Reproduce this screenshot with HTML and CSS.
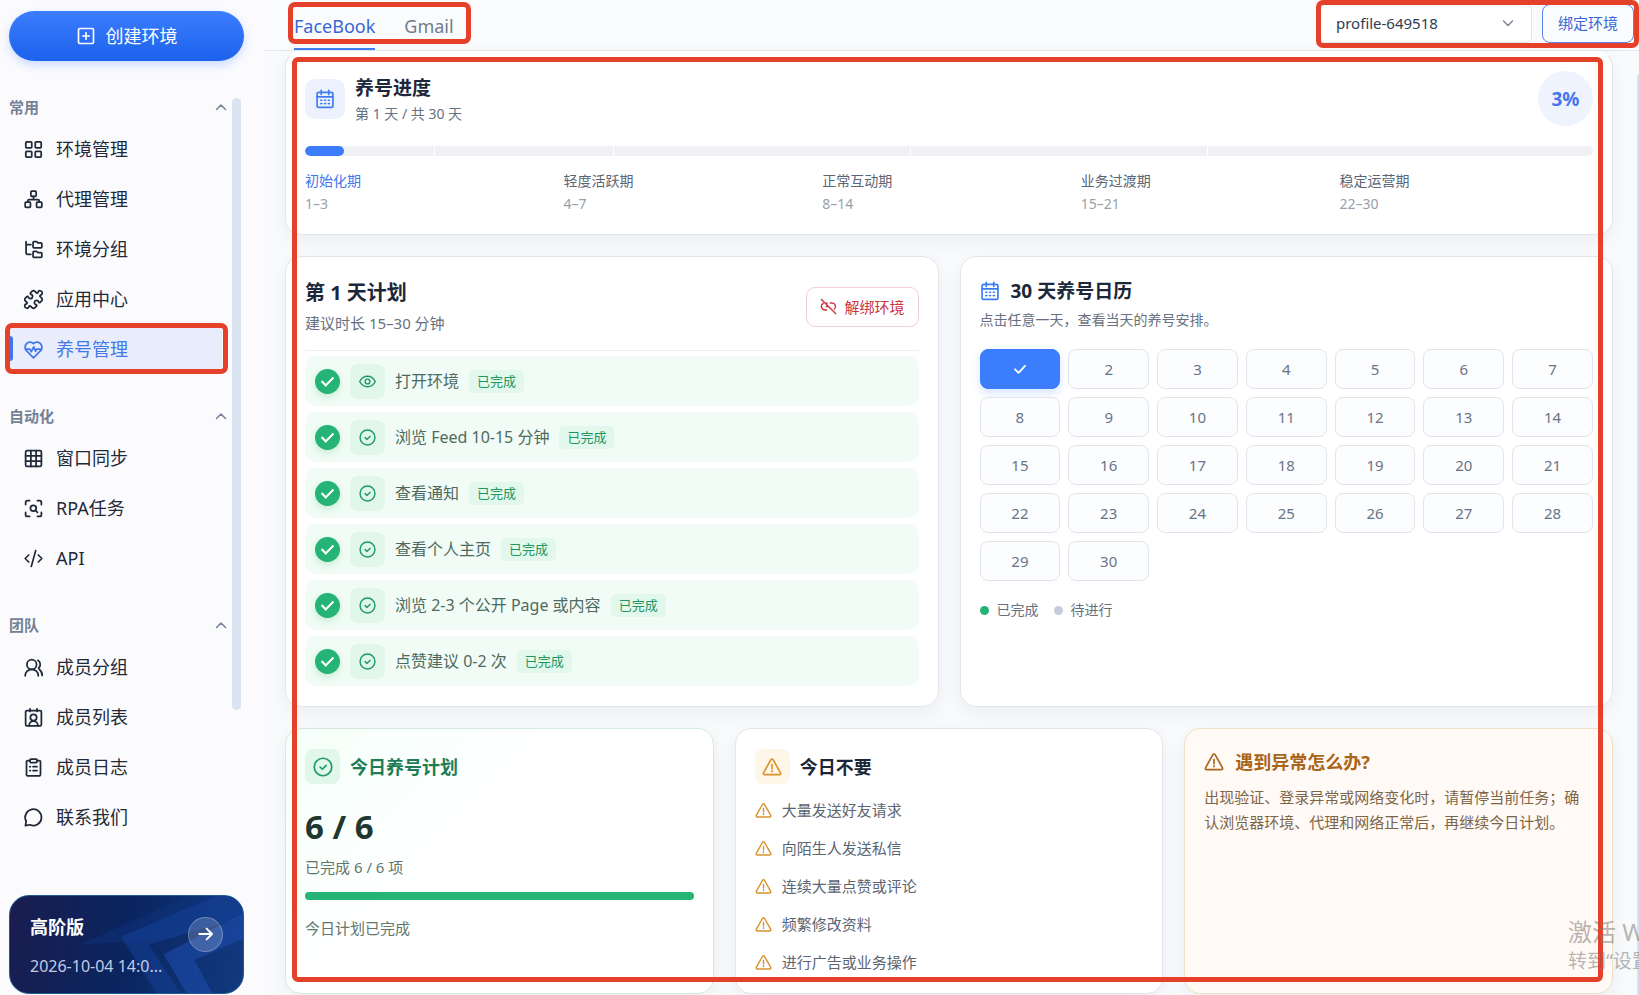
FILE: index.html
```html
<!DOCTYPE html>
<html lang="zh-CN">
<head>
<meta charset="utf-8">
<meta name="viewport" content="width=device-width, initial-scale=1">
<title>养号管理</title>
<link rel="stylesheet" href="styles.css">
</head>
<body>
<svg class="sprite" aria-hidden="true">
  <symbol id="i-plus" viewBox="0 0 24 24"><rect x="3" y="3" width="18" height="18" rx="1.5"/><path d="M12 8v8M8 12h8"/></symbol>
  <symbol id="i-up" viewBox="0 0 24 24"><path d="M3 17l9-9 9 9"/></symbol>
  <symbol id="i-down" viewBox="0 0 24 24"><path d="M3 8l9 9 9-9"/></symbol>
  <symbol id="i-apps" viewBox="0 0 24 24"><rect x="3.2" y="3.2" width="6.8" height="6.8" rx="1"/><rect x="14" y="3.2" width="6.8" height="6.8" rx="1"/><rect x="3.2" y="14" width="6.8" height="6.8" rx="1"/><rect x="14" y="14" width="6.8" height="6.8" rx="1"/></symbol>
  <symbol id="i-tree" viewBox="0 0 24 24"><rect x="9" y="2.5" width="6" height="6" rx="1"/><rect x="2.5" y="15" width="6" height="6" rx="1"/><rect x="15.500" y="15" width="6" height="6" rx="1"/><path d="M12 8.500v3.500M5.500 15v-1.500a1.500 1.500 0 0 1 1.500-1.500h10a1.500 1.500 0 0 1 1.500 1.500V15"/></symbol>
  <symbol id="i-folders" viewBox="0 0 24 24"><path d="M3.500 3v12.500a2 2 0 0 0 2 2H9M3.500 6.500H9M12.500 3h3l1.500 1.500h3.500a1 1 0 0 1 1 1V9a1 1 0 0 1-1 1h-8a1 1 0 0 1-1-1V4a1 1 0 0 1 1-1zM12.500 14h3l1.500 1.500h3.500a1 1 0 0 1 1 1V20a1 1 0 0 1-1 1h-8a1 1 0 0 1-1-1v-5a1 1 0 0 1 1-1z"/></symbol>
  <symbol id="i-puzzle" viewBox="0 0 24 24"><path d="M15.390 4.390a1 1 0 0 0 1.680-.474 2.500 2.500 0 1 1 3.014 3.015 1 1 0 0 0-.474 1.680l1.683 1.682a2.414 2.414 0 0 1 0 3.414L19.610 15.390a1 1 0 0 1-1.680-.474 2.500 2.500 0 1 0-3.014 3.015 1 1 0 0 1 .474 1.680l-1.683 1.682a2.414 2.414 0 0 1-3.414 0L8.610 19.610a1 1 0 0 0-1.680.474 2.500 2.500 0 1 1-3.014-3.015 1 1 0 0 0 .474-1.680l-1.683-1.682a2.414 2.414 0 0 1 0-3.414L4.390 8.610a1 1 0 0 1 1.680.474 2.500 2.500 0 1 0 3.014-3.015 1 1 0 0 1-.474-1.680l1.683-1.682a2.414 2.414 0 0 1 3.414 0z"/></symbol>
  <symbol id="i-heart" viewBox="0 0 24 24"><path d="M12 21.500l-7.800-7.800A5.700 5.700 0 0 1 12 5.200a5.700 5.700 0 0 1 7.800 8.500zM2.800 11.500h5l1.700 3 2.800-5.500 2 5 1.200-2.500h5.700"/></symbol>
  <symbol id="i-grid" viewBox="0 0 24 24"><rect x="3" y="3" width="18" height="18" rx="1.500"/><path d="M9 3v18M15 3v18M3 9h18M3 15h18"/></symbol>
  <symbol id="i-scan" viewBox="0 0 24 24"><path d="M3 7.500V5a2 2 0 0 1 2-2h2.500M16.500 3H19a2 2 0 0 1 2 2v2.500M21 16.500V19a2 2 0 0 1-2 2h-2.500M7.500 21H5a2 2 0 0 1-2-2v-2.500M14 14l2.500 2.500"/><circle cx="11.800" cy="11.800" r="3.300"/></symbol>
  <symbol id="i-code" viewBox="0 0 24 24"><path d="M6.500 8L2.500 12l4 4M17.500 8l4 4-4 4M14.500 3l-5 18"/></symbol>
  <symbol id="i-group" viewBox="0 0 24 24"><circle cx="10" cy="8.500" r="5.500"/><path d="M2.500 21.500a7.500 7.500 0 0 1 15 0M17 3.800a5.500 5.500 0 0 1 .8 8.900M18.500 14a9 9 0 0 1 3.500 7"/></symbol>
  <symbol id="i-badge" viewBox="0 0 24 24"><rect x="3" y="4" width="18" height="17.500" rx="1.500"/><path d="M8 2v3M16 2v3M7 21a5 5 0 0 1 10 0"/><circle cx="12" cy="12" r="3.600"/></symbol>
  <symbol id="i-clip" viewBox="0 0 24 24"><path d="M8 4H5.500A1.500 1.500 0 0 0 4 5.500v14A1.500 1.500 0 0 0 5.500 21.500h13a1.500 1.500 0 0 0 1.500-1.500V5.500A1.500 1.500 0 0 0 18.500 4H16M7.800 11h.6M7.800 15.500h.6M11.500 11H16M11.500 15.500H16"/><rect x="8" y="2.300" width="8" height="4" rx="1"/></symbol>
  <symbol id="i-chat" viewBox="0 0 24 24"><path d="M2.800 21.200l.8-5A9.300 9.300 0 1 1 8 20.300z"/></symbol>
  <symbol id="i-arrow" viewBox="0 0 24 24"><path d="M2 12h19M13 4l8 8-8 8"/></symbol>
  <symbol id="i-cal" viewBox="0 0 24 24"><rect x="2.500" y="4" width="19" height="18" rx="2"/><path d="M2.500 9.500h19M7.500 1.500v5M16.500 1.500v5M7 13.500h1.200M11.500 13.500h1.200M16 13.500h1.200M7 17.500h1.200M11.500 17.500h1.200M16 17.500h1.200"/></symbol>
  <symbol id="i-unlink" viewBox="0 0 24 24"><path d="M2 2l20 20M9.500 17H7A5 5 0 0 1 4.500 7.700M9.500 7h.5M14.500 7H17a5 5 0 0 1 3.500 8.500M9 12h2.500"/></symbol>
  <symbol id="i-eye" viewBox="0 0 24 24"><path d="M1 12C3.500 7 7.500 4.500 12 4.500S20.500 7 23 12c-2.500 5-6.500 7.500-11 7.500S3.500 17 1 12z"/><circle cx="12" cy="12" r="3.400"/></symbol>
  <symbol id="i-ok" viewBox="0 0 24 24"><circle cx="12" cy="12" r="10.500"/><path d="M8.500 12l2.700 2.700 4.600-4.600"/></symbol>
  <symbol id="i-tick" viewBox="0 0 24 24"><path d="M3.500 12.500l6 6L20.500 6.500"/></symbol>
  <symbol id="i-warn" viewBox="0 0 24 24"><path d="M10.700 3.200L1.800 19a1.500 1.500 0 0 0 1.300 2.200h17.800a1.500 1.500 0 0 0 1.300-2.200L13.300 3.200a1.500 1.500 0 0 0-2.600 0zM12 9v5M12 16.700v1"/></symbol>
</svg>

<div class="app">
  <aside class="sidebar">
    <button class="create" type="button"><svg class="icon icon-20"><use href="#i-plus"/></svg>创建环境</button>
    <div class="nav-area">
      <nav class="nav">
        <section class="group">
          <button class="group-head" type="button">常用<svg class="icon icon-12"><use href="#i-up"/></svg></button>
          <a class="item" href="#"><svg class="icon icon-22"><use href="#i-apps"/></svg>环境管理</a>
          <a class="item" href="#"><svg class="icon icon-22"><use href="#i-tree"/></svg>代理管理</a>
          <a class="item" href="#"><svg class="icon icon-22"><use href="#i-folders"/></svg>环境分组</a>
          <a class="item" href="#"><svg class="icon icon-22"><use href="#i-puzzle"/></svg>应用中心</a>
          <a class="item active" href="#"><svg class="icon icon-22"><use href="#i-heart"/></svg>养号管理<span class="mark mark-item"></span></a>
        </section>
        <section class="group">
          <button class="group-head" type="button">自动化<svg class="icon icon-12"><use href="#i-up"/></svg></button>
          <a class="item" href="#"><svg class="icon icon-22"><use href="#i-grid"/></svg>窗口同步</a>
          <a class="item" href="#"><svg class="icon icon-22"><use href="#i-scan"/></svg>RPA任务</a>
          <a class="item" href="#"><svg class="icon icon-22"><use href="#i-code"/></svg>API</a>
        </section>
        <section class="group">
          <button class="group-head" type="button">团队<svg class="icon icon-12"><use href="#i-up"/></svg></button>
          <a class="item" href="#"><svg class="icon icon-22"><use href="#i-group"/></svg>成员分组</a>
          <a class="item" href="#"><svg class="icon icon-22"><use href="#i-badge"/></svg>成员列表</a>
          <a class="item" href="#"><svg class="icon icon-22"><use href="#i-clip"/></svg>成员日志</a>
          <a class="item" href="#"><svg class="icon icon-22"><use href="#i-chat"/></svg>联系我们</a>
        </section>
      </nav>
      <div class="nav-scroll"></div>
    </div>
    <section class="promo">
      <svg class="promo-art" viewBox="0 0 235 100" preserveAspectRatio="none" aria-hidden="true">
        <path d="M70 50L235-25V20L160 45Z" fill="#12398a" opacity=".3"/>
        <path d="M112 42L235-12V22L140 50L172 100H148Z" fill="#1744a0" opacity=".45"/>
        <path d="M155 60L235 18V44L186 66L204 100H178Z" fill="#1c4aa8" opacity=".65"/>
      </svg>
      <div class="promo-text">
        <strong class="promo-title">高阶版</strong>
        <span class="promo-date">2026-10-04 14:0...</span>
      </div>
      <button class="promo-go" type="button" aria-label="查看"><svg class="icon icon-16"><use href="#i-arrow"/></svg></button>
    </section>
  </aside>

  <main class="main">
    <header class="topbar">
      <div class="tabs">
        <button class="tab on" type="button">FaceBook</button>
        <button class="tab" type="button">Gmail</button>
        <span class="mark mark-tabs"></span>
      </div>
      <div class="bind">
        <div class="picker">
          <select class="select" aria-label="环境"><option>profile-649518</option></select>
          <svg class="icon icon-12 picker-arrow"><use href="#i-down"/></svg>
        </div>
        <button class="bind-btn" type="button">绑定环境</button>
        <span class="mark mark-bind"></span>
      </div>
    </header>

    <div class="content">
      <section class="card progress">
        <div class="progress-head">
          <span class="tile tile-blue"><svg class="icon icon-20"><use href="#i-cal"/></svg></span>
          <div class="progress-title">
            <h2 class="h19">养号进度</h2>
            <p class="sub14">第 1 天 / 共 30 天</p>
          </div>
          <span class="pct">3%</span>
        </div>
        <div class="track">
          <span class="seg seg-a"></span><span class="seg seg-b"></span><span class="seg seg-c"></span><span class="seg seg-c"></span><span class="seg seg-d"></span>
          <span class="fill" style="width:3%"></span>
        </div>
        <ol class="phases">
          <li class="phase now"><span>初始化期</span><small class="days">1–3</small></li>
          <li class="phase"><span>轻度活跃期</span><small class="days">4–7</small></li>
          <li class="phase"><span>正常互动期</span><small class="days">8–14</small></li>
          <li class="phase"><span>业务过渡期</span><small class="days">15–21</small></li>
          <li class="phase"><span>稳定运营期</span><small class="days">22–30</small></li>
        </ol>
      </section>

      <div class="row two">
        <section class="card plan">
          <div class="plan-head">
            <div>
              <h2 class="h20">第 1 天计划</h2>
              <p class="sub15">建议时长 15–30 分钟</p>
            </div>
            <button class="unbind" type="button"><svg class="icon icon-18"><use href="#i-unlink"/></svg>解绑环境</button>
          </div>
          <div class="tasks">
            <label class="task"><input class="check" type="checkbox" checked><span class="tile tile-green"><svg class="icon icon-18"><use href="#i-eye"/></svg></span><span>打开环境</span><span class="done">已完成</span></label>
            <label class="task"><input class="check" type="checkbox" checked><span class="tile tile-green"><svg class="icon icon-18"><use href="#i-ok"/></svg></span><span>浏览 Feed 10-15 分钟</span><span class="done">已完成</span></label>
            <label class="task"><input class="check" type="checkbox" checked><span class="tile tile-green"><svg class="icon icon-18"><use href="#i-ok"/></svg></span><span>查看通知</span><span class="done">已完成</span></label>
            <label class="task"><input class="check" type="checkbox" checked><span class="tile tile-green"><svg class="icon icon-18"><use href="#i-ok"/></svg></span><span>查看个人主页</span><span class="done">已完成</span></label>
            <label class="task"><input class="check" type="checkbox" checked><span class="tile tile-green"><svg class="icon icon-18"><use href="#i-ok"/></svg></span><span>浏览 2-3 个公开 Page 或内容</span><span class="done">已完成</span></label>
            <label class="task"><input class="check" type="checkbox" checked><span class="tile tile-green"><svg class="icon icon-18"><use href="#i-ok"/></svg></span><span>点赞建议 0-2 次</span><span class="done">已完成</span></label>
          </div>
        </section>

        <section class="card calendar">
          <h2 class="h19 cal-title"><svg class="icon icon-20 blue"><use href="#i-cal"/></svg>30 天养号日历</h2>
          <p class="sub14">点击任意一天，查看当天的养号安排。</p>
          <div class="days-grid">
            <button class="day today" type="button" aria-label="1"><svg class="icon icon-14"><use href="#i-tick"/></svg></button>
            <button class="day" type="button">2</button><button class="day" type="button">3</button><button class="day" type="button">4</button><button class="day" type="button">5</button><button class="day" type="button">6</button><button class="day" type="button">7</button>
            <button class="day" type="button">8</button><button class="day" type="button">9</button><button class="day" type="button">10</button><button class="day" type="button">11</button><button class="day" type="button">12</button><button class="day" type="button">13</button><button class="day" type="button">14</button>
            <button class="day" type="button">15</button><button class="day" type="button">16</button><button class="day" type="button">17</button><button class="day" type="button">18</button><button class="day" type="button">19</button><button class="day" type="button">20</button><button class="day" type="button">21</button>
            <button class="day" type="button">22</button><button class="day" type="button">23</button><button class="day" type="button">24</button><button class="day" type="button">25</button><button class="day" type="button">26</button><button class="day" type="button">27</button><button class="day" type="button">28</button>
            <button class="day" type="button">29</button><button class="day" type="button">30</button>
          </div>
          <div class="legend">
            <span class="key"><i class="dot dot-green"></i>已完成</span>
            <span class="key"><i class="dot dot-gray"></i>待进行</span>
          </div>
        </section>
      </div>

      <div class="row three">
        <section class="card today-plan">
          <h2 class="h18 card-title"><span class="tile tile-green"><svg class="icon icon-20"><use href="#i-ok"/></svg></span>今日养号计划</h2>
          <p class="score">6 / 6</p>
          <p class="note">已完成 6 / 6 项</p>
          <div class="bar"></div>
          <p class="note">今日计划已完成</p>
        </section>
        <section class="card avoid">
          <h2 class="h18 card-title"><span class="tile tile-amber"><svg class="icon icon-20"><use href="#i-warn"/></svg></span>今日不要</h2>
          <ul class="donts">
            <li class="dont"><svg class="icon icon-18 amber"><use href="#i-warn"/></svg>大量发送好友请求</li>
            <li class="dont"><svg class="icon icon-18 amber"><use href="#i-warn"/></svg>向陌生人发送私信</li>
            <li class="dont"><svg class="icon icon-18 amber"><use href="#i-warn"/></svg>连续大量点赞或评论</li>
            <li class="dont"><svg class="icon icon-18 amber"><use href="#i-warn"/></svg>频繁修改资料</li>
            <li class="dont"><svg class="icon icon-18 amber"><use href="#i-warn"/></svg>进行广告或业务操作</li>
          </ul>
        </section>
        <section class="card trouble">
          <h2 class="h18 trouble-title"><svg class="icon icon-20"><use href="#i-warn"/></svg>遇到异常怎么办?</h2>
          <p class="trouble-text">出现验证、登录异常或网络变化时，请暂停当前任务；确认浏览器环境、代理和网络正常后，再继续今日计划。</p>
        </section>
      </div>
    </div>
    <div class="page-scroll"></div>
    <span class="mark mark-content"></span>
    <div class="watermark"><p class="wm-big">激活 W</p><p class="wm-small">转到“设置</p></div>
  </main>
</div>
</body>
</html>
```
FILE: styles.css
```css
* { box-sizing: border-box; }
body {
  margin: 0;
  font-family: "Noto Sans", "Noto Sans CJK SC", sans-serif;
  font-size: 15px;
  line-height: 20px;
  color: #1c2739;
  background: #fbfbfe;
}
h2, p, ol, ul { margin: 0; padding: 0; list-style: none; }
button, select { font: inherit; color: inherit; margin: 0; cursor: pointer; }
a { color: inherit; text-decoration: none; }
.sprite { display: none; }

.icon { flex: none; fill: none; stroke: currentColor; stroke-width: 2; stroke-linecap: round; stroke-linejoin: round; }
.icon-12 { width: 12px; height: 12px; }
.icon-14 { width: 14px; height: 14px; stroke-width: 3; }
.icon-16 { width: 16px; height: 16px; }
.icon-18 { width: 17px; height: 17px; }
.icon-20 { width: 20px; height: 20px; }
.icon-22 { width: 21px; height: 21px; }
.blue { color: #3a7bfd; }
.amber { color: #d9922a; }

.app { display: flex; height: 100vh; overflow: hidden; }

/* Sidebar */
.sidebar { flex: none; width: 264px; padding: 11px 20px 1px 9px; display: flex; flex-direction: column; }
.create {
  height: 50px; border: 0; border-radius: 25px;
  display: flex; align-items: center; justify-content: center; gap: 10px;
  font-size: 18px; color: #fff;
  background: linear-gradient(#3b7dfe, #1d62ec);
  box-shadow: 0 4px 10px rgba(59, 125, 254, .25);
}
.nav-area { flex: 1; display: flex; justify-content: space-between; padding-top: 28px; }
.nav { width: 218px; display: flex; flex-direction: column; gap: 20px; }
.nav-scroll { width: 9px; height: 612px; margin: 9px 3px 0 0; border-radius: 5px; background: #dae3f0; }
.group-head {
  width: 100%; height: 35px; padding: 0; border: 0; background: none;
  display: flex; align-items: center; justify-content: space-between;
  font-size: 15px; font-weight: 700; color: #748296;
}
.group-head .icon { stroke-width: 3; }
.item {
  position: relative; height: 42px; margin: 4px 5px 8px 1px; padding: 0 13px;
  display: flex; align-items: center; gap: 12px;
  font-size: 18px; color: #1f2937; border-radius: 4px;
}
.item.active { color: #4278ea; background: #e8ecfb; }
.item.active::before { content: ""; position: absolute; left: 0; top: 8px; width: 3px; height: 25px; border-radius: 0 3px 3px 0; background: #3f76ec; }

.promo {
  position: relative; overflow: hidden; height: 99px; border-radius: 20px; padding: 0 20px;
  display: flex; align-items: center; justify-content: space-between;
  border: 1px solid #1f5a94; color: #fff;
  background: linear-gradient(100deg, #1a1d4e, #0a2560 50%, #123a80);
}
.promo-art { position: absolute; inset: 0; width: 100%; height: 100%; }
.promo-text { position: relative; display: flex; flex-direction: column; gap: 18px; padding-top: 2px; }
.promo-title { font-size: 18px; line-height: 22px; }
.promo-date { font-size: 16px; color: #c0cce6; }
.promo-go {
  position: relative; width: 35px; height: 35px; margin-bottom: 21px; padding: 0; border-radius: 50%;
  display: grid; place-items: center; color: #fff;
  background: rgba(255, 255, 255, .18); border: 1px solid rgba(255, 255, 255, .25);
}
.promo-go .icon { stroke-width: 3; }

/* Top bar */
.main { position: relative; flex: 1; min-width: 0; display: flex; flex-direction: column; background: #f8fafc; }
.topbar { flex: none; height: 51px; display: flex; justify-content: space-between; border-bottom: 1px solid #e3e8ed; padding: 0 5px 0 30px; background: #f9fbfc; }
.tabs { position: relative; display: flex; gap: 29px; }
.tab { height: 50px; padding: 3px 0 0; border: 0; border-bottom: 2px solid transparent; background: none; font-size: 18px; color: #717b8a; }
.tab.on { color: #3866d6; border-color: #3f7df0; }
.bind { position: relative; display: flex; gap: 10px; padding-top: 4px; }
.picker { position: relative; }
.select { appearance: none; width: 212px; height: 39px; padding: 0 36px 2px 15px; border: 1px solid #dde3ea; border-radius: 6px; background: #fff; font-size: 15px; color: #2e3d54; }
.picker-arrow { position: absolute; right: 18px; top: 13px; color: #7a8698; stroke-width: 3; pointer-events: none; }
.bind-btn { height: 39px; padding: 0 15px 2px; border: 1px solid #5585ea; border-radius: 8px; background: #fafcff; font-size: 15px; color: #3866d6; }

/* Content */
.content { flex: 1; display: flex; flex-direction: column; gap: 21px; padding: 0 26px 1px 21px; }
.card { min-width: 0; background: #fff; border: 1px solid #e2e6eb; border-radius: 16px; padding: 20px 19px; box-shadow: 0 6px 18px rgba(30, 41, 59, .06); }
.row { display: grid; gap: 21px; }
.two { grid-template-columns: repeat(2, 1fr); }
.three { flex: 1; grid-template-columns: repeat(3, 1fr); }
.h18 { font-size: 18px; line-height: 24px; }
.h19 { font-size: 19px; line-height: 24px; }
.h20 { font-size: 20px; line-height: 26px; }
.sub14 { font-size: 14px; color: #667080; }
.sub15 { font-size: 15px; color: #667080; }
.tile { flex: none; width: 35px; height: 35px; border-radius: 8px; display: grid; place-items: center; }
.tile-blue { width: 40px; height: 40px; border-radius: 10px; color: #3f7df0; background: #edf1fd; }
.tile-green { color: #1f9a63; background: #e0f7ea; }
.tile-amber { color: #dd922c; background: #fef6e8; }

.progress { border-top-color: #fff; padding-top: 19px; }
.progress-head { display: flex; align-items: center; gap: 10px; }
.progress-title { flex: 1; display: flex; flex-direction: column; gap: 4px; padding-top: 2px; }
.pct { width: 55px; height: 55px; border-radius: 50%; display: grid; place-items: center; background: #eff3fe; color: #4277ee; font-size: 19px; font-weight: 700; }
.track { position: relative; display: flex; gap: 1px; height: 10px; margin-top: 20px; border-radius: 5px; overflow: hidden; background: #fff; }
.seg { background: #eff1f4; }
.seg-a { flex: 129; }
.seg-b { flex: 179; }
.seg-c { flex: 297; }
.seg-d { flex: 387; }
.fill { position: absolute; left: 0; top: 0; height: 100%; border-radius: 5px; background: #3b7dfd; }
.phases { display: grid; grid-template-columns: repeat(5, 1fr); gap: 5px; margin-top: 15px; }
.phase { display: flex; flex-direction: column; gap: 3px; font-size: 14px; color: #5b6573; }
.phase.now { color: #4277ee; }
.days { font-size: 14px; color: #989fa9; }

.plan-head { display: flex; align-items: center; justify-content: space-between; padding: 3px 0 17px; border-bottom: 1px solid #eceef1; }
.plan-head .sub15 { margin-top: 7px; }
.unbind { display: flex; align-items: center; gap: 7px; height: 40px; padding: 0 13px; border: 1px solid #f3cfd3; border-radius: 9px; background: #fff; color: #cb3540; font-size: 15px; }
.tasks { display: flex; flex-direction: column; gap: 6px; margin-top: 5px; }
.task { display: flex; align-items: center; gap: 10px; height: 50px; padding: 0 10px; border-radius: 10px; background: #f0fcf5; font-size: 16px; color: #4f6a60; }
.check { appearance: none; position: relative; flex: none; width: 25px; height: 25px; margin: 0; border-radius: 50%; background: #25b475; box-shadow: 0 3px 7px rgba(37, 180, 117, .2); }
.check:checked::after { content: ""; position: absolute; left: 9px; top: 5px; width: 5px; height: 10px; border: solid #fff; border-width: 0 2px 2px 0; transform: rotate(45deg); }
.done { padding: 2px 8px; border-radius: 5px; background: #e3f8ec; color: #209463; font-size: 13px; line-height: 19px; }

.cal-title { display: flex; align-items: center; gap: 11px; padding-top: 2px; }
.calendar .sub14 { margin-top: 7px; }
.days-grid { display: grid; grid-template-columns: repeat(7, 1fr); gap: 8px; margin-top: 19px; }
.day { height: 40px; padding: 0; border: 1px solid #e1e5eb; border-radius: 8px; background: #fcfdff; color: #697486; font-size: 15px; }
.day.today { display: grid; place-items: center; border-color: #3b7dfd; background: #3b7dfd; color: #fff; box-shadow: 0 4px 10px rgba(59, 125, 253, .2); }
.legend { display: flex; gap: 15px; margin-top: 19px; font-size: 14px; color: #667080; }
.key { display: flex; align-items: center; gap: 8px; }
.dot { width: 9px; height: 9px; border-radius: 50%; }
.dot-green { background: #25b475; }
.dot-gray { background: #c3cddb; }

.card-title { display: flex; align-items: center; gap: 10px; }
.today-plan { border-color: #d5e9de; background: linear-gradient(135deg, #f5fffa, #fff 45%); }
.today-plan .card-title { color: #1e7d56; }
.score { margin-top: 23px; font-size: 33px; line-height: 40px; font-weight: 700; color: #20372f; }
.note { margin-top: 10px; font-size: 15px; color: #62766e; }
.bar { height: 8px; margin: 15px 0 18px; border-radius: 4px; background: #25b475; }
.avoid { padding-bottom: 10px; }
.donts { margin-top: 7px; }
.dont { display: flex; align-items: center; gap: 10px; height: 38px; color: #5b6573; }
.trouble { border-color: #f0e0c4; background: #fffaf5; }
.trouble-title { display: flex; align-items: center; gap: 11px; color: #a96519; padding-top: 1px; }
.trouble-text { margin-top: 11px; font-size: 15px; line-height: 25px; color: #7d6548; }

.page-scroll { position: absolute; right: 0; top: 75px; bottom: 0; width: 2px; background: #d5e3f5; }

/* Highlight frames */
.mark { position: absolute; border: 5px solid #e5402a; border-radius: 7px; pointer-events: none; }
.mark-item { inset: -5px -6px -4px -5px; }
.mark-tabs { top: 2px; left: -6px; right: -17px; height: 42px; }
.mark-bind { top: 0; left: -4px; right: -5px; height: 48px; }
.mark-content { top: 57px; left: 28px; right: 36px; bottom: 13px; border-radius: 6px; }

.watermark { position: absolute; right: 0; bottom: 22px; width: 71px; overflow: hidden; white-space: nowrap; color: rgba(120, 120, 120, .55); pointer-events: none; }
.wm-big { font-size: 24px; line-height: 34px; }
.wm-small { font-size: 19px; line-height: 24px; }
```
